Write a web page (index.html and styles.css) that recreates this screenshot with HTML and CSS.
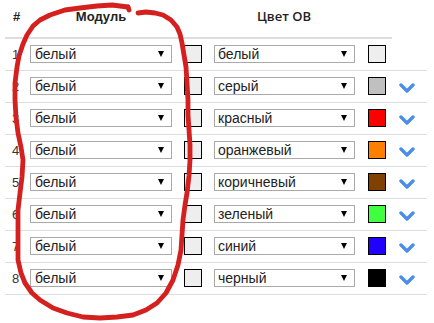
FILE: index.html
```html
<!DOCTYPE html>
<html lang="ru">
<head>
    <meta charset="UTF-8">
    <title>Модуль</title>
    <link rel="stylesheet" href="styles.css">
</head>
<body>
<div class="page">
    <table class="grid">
        <colgroup>
            <col class="w-num"><col class="w-mod"><col class="w-sw"><col class="w-col"><col class="w-sw2"><col class="w-chev">
        </colgroup>
        <thead>
        <tr>
            <th class="c-num">#</th>
            <th class="c-mod">Модуль</th>
            <th class="c-sw"></th>
            <th class="c-col">Цвет ОВ</th>
            <th class="c-sw2"></th>
            <th class="c-chev nb"></th>
        </tr>
        </thead>
        <tbody>
        <tr>
            <td class="c-num">1</td>
            <td class="c-mod"><div class="sel"><span>белый</span><i class="arr"></i></div></td>
            <td class="c-sw"><div class="swatch"></div></td>
            <td class="c-col"><div class="sel sel2"><span>белый</span><i class="arr"></i></div></td>
            <td class="c-sw2"><div class="swatch"></div></td>
            <td class="c-chev"></td>
        </tr>
        <tr>
            <td class="c-num">2</td>
            <td class="c-mod"><div class="sel"><span>белый</span><i class="arr"></i></div></td>
            <td class="c-sw"><div class="swatch"></div></td>
            <td class="c-col"><div class="sel sel2"><span>серый</span><i class="arr"></i></div></td>
            <td class="c-sw2"><div class="swatch" style="background:#c0c0c0"></div></td>
            <td class="c-chev"><svg class="chev" width="16" height="10" viewBox="0 0 16 10"><polyline points="2,2 8,8 14,2"/></svg></td>
        </tr>
        <tr>
            <td class="c-num">3</td>
            <td class="c-mod"><div class="sel"><span>белый</span><i class="arr"></i></div></td>
            <td class="c-sw"><div class="swatch"></div></td>
            <td class="c-col"><div class="sel sel2"><span>красный</span><i class="arr"></i></div></td>
            <td class="c-sw2"><div class="swatch" style="background:#ff0000"></div></td>
            <td class="c-chev"><svg class="chev" width="16" height="10" viewBox="0 0 16 10"><polyline points="2,2 8,8 14,2"/></svg></td>
        </tr>
        <tr>
            <td class="c-num">4</td>
            <td class="c-mod"><div class="sel"><span>белый</span><i class="arr"></i></div></td>
            <td class="c-sw"><div class="swatch"></div></td>
            <td class="c-col"><div class="sel sel2"><span>оранжевый</span><i class="arr"></i></div></td>
            <td class="c-sw2"><div class="swatch" style="background:#ff8000"></div></td>
            <td class="c-chev"><svg class="chev" width="16" height="10" viewBox="0 0 16 10"><polyline points="2,2 8,8 14,2"/></svg></td>
        </tr>
        <tr>
            <td class="c-num">5</td>
            <td class="c-mod"><div class="sel"><span>белый</span><i class="arr"></i></div></td>
            <td class="c-sw"><div class="swatch"></div></td>
            <td class="c-col"><div class="sel sel2"><span>коричневый</span><i class="arr"></i></div></td>
            <td class="c-sw2"><div class="swatch" style="background:#804000"></div></td>
            <td class="c-chev"><svg class="chev" width="16" height="10" viewBox="0 0 16 10"><polyline points="2,2 8,8 14,2"/></svg></td>
        </tr>
        <tr>
            <td class="c-num">6</td>
            <td class="c-mod"><div class="sel"><span>белый</span><i class="arr"></i></div></td>
            <td class="c-sw"><div class="swatch"></div></td>
            <td class="c-col"><div class="sel sel2"><span>зеленый</span><i class="arr"></i></div></td>
            <td class="c-sw2"><div class="swatch" style="background:#40ff40"></div></td>
            <td class="c-chev"><svg class="chev" width="16" height="10" viewBox="0 0 16 10"><polyline points="2,2 8,8 14,2"/></svg></td>
        </tr>
        <tr>
            <td class="c-num">7</td>
            <td class="c-mod"><div class="sel"><span>белый</span><i class="arr"></i></div></td>
            <td class="c-sw"><div class="swatch"></div></td>
            <td class="c-col"><div class="sel sel2"><span>синий</span><i class="arr"></i></div></td>
            <td class="c-sw2"><div class="swatch" style="background:#2000ff"></div></td>
            <td class="c-chev"><svg class="chev" width="16" height="10" viewBox="0 0 16 10"><polyline points="2,2 8,8 14,2"/></svg></td>
        </tr>
        <tr>
            <td class="c-num">8</td>
            <td class="c-mod"><div class="sel"><span>белый</span><i class="arr"></i></div></td>
            <td class="c-sw"><div class="swatch"></div></td>
            <td class="c-col"><div class="sel sel2"><span>черный</span><i class="arr"></i></div></td>
            <td class="c-sw2"><div class="swatch" style="background:#000000"></div></td>
            <td class="c-chev"><svg class="chev" width="16" height="10" viewBox="0 0 16 10"><polyline points="2,2 8,8 14,2"/></svg></td>
        </tr>
        </tbody>
    </table>

    <!-- hand-drawn mark over the module column -->
    <svg class="mark" width="434" height="323" viewBox="0 0 434 323">
        <polyline points="128,7 112,5 97,6 80,8 65,10 50,15 40,20 33,26 27,35 23,44 19,56 17,67 15,83 15,100 16,117 18,133 21,147 23,160 22,177 20,193 18,210 18,227 18,244 18,260 21,273 25,283 32,293 40,300 53,308 67,313 83,317 100,318 117,317 133,315 146,310 157,303 166,293 173,280 178,265 181,250 182,235 183,220 185,205 187,193 189,176 190,160 190,145 189,130 188,115 188,100 187,83 186,67 184,55 182,43 180,34 177,27 171,20 163,15 155,13 146,12 138,13"/>
        <line x1="128" y1="7" x2="129" y2="10"/>
    </svg>
</div>
</body>
</html>
```

FILE: styles.css
```css
html, body {
    margin: 0;
    padding: 0;
    background: #fff;
}
.page {
    position: relative;
    width: 434px;
    height: 323px;
    overflow: hidden;
    font-family: "Liberation Sans", Arial, sans-serif;
    font-size: 14px;
    color: #333;
}
.grid {
    border-collapse: collapse;
    table-layout: fixed;
    margin-left: 5px;
    width: 422px;
}
.w-num { width: 25px; }
.w-mod { width: 146px; }
.w-sw { width: 32px; }
.w-col { width: 152px; }
.w-sw2 { width: 32px; }
.w-chev { width: 35px; }

.grid th, .grid td {
    box-sizing: border-box;
}
.grid th {
    height: 38px;
    padding: 0 0 5px 0;
    border-bottom: 2px solid #ddd;
    font-weight: bold;
    font-size: 13px;
    color: #222;
    vertical-align: middle;
    text-align: center;
}
.grid th.nb {
    border-bottom: none;
}
.grid th.c-num {
    text-align: left;
    padding-left: 8px;
}
.grid th.c-mod {
    padding-right: 4px;
}
.grid th.c-col {
    font-family: "Open Sans", "Liberation Sans", sans-serif;
    font-weight: 600;
}
.grid td {
    height: 32px;
    padding: 0;
    border-bottom: 1px solid #ddd;
    vertical-align: middle;
}
td.c-num {
    padding-left: 7px;
    font-size: 13px;
    color: #333;
}
td.c-sw, td.c-sw2 {
    padding-left: 8px;
}
td.c-col {
    padding-left: 6px;
}
td.c-chev {
    padding-left: 7px;
}

.sel {
    box-sizing: border-box;
    width: 142px;
    height: 18px;
    border: 1px solid #a9a9a9;
    background: #fff;
    display: flex;
    align-items: center;
    justify-content: space-between;
    padding: 0 7px 0 4px;
    font-size: 14px;
    color: #222;
}
.sel2 {
    width: 141px;
    padding-left: 3px;
}
.arr {
    width: 0;
    height: 0;
    border-left: 3px solid transparent;
    border-right: 3px solid transparent;
    border-top: 6px solid #000;
}
.swatch {
    box-sizing: border-box;
    width: 18px;
    height: 18px;
    border: 1px solid #000;
    background: #eee;
}
.chev {
    display: block;
    margin-top: 3px;
}
.chev polyline {
    fill: none;
    stroke: #4a8fe2;
    stroke-width: 3.4;
    stroke-linecap: round;
    stroke-linejoin: round;
}
.mark {
    position: absolute;
    left: 0;
    top: 0;
    pointer-events: none;
}
.mark polyline, .mark line {
    fill: none;
    stroke: #d4201e;
    stroke-width: 4.8;
    stroke-linecap: round;
    stroke-linejoin: round;
}
```
